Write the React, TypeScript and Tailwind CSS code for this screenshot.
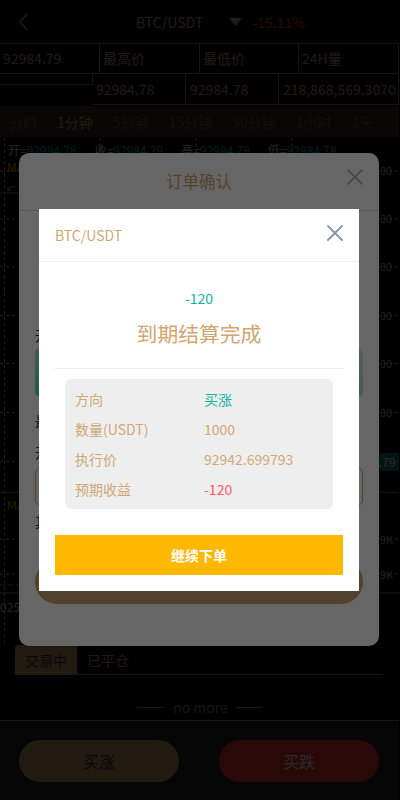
import { X, ChevronLeft } from 'lucide-react'

const tan = 'text-[#d0a877]'

const intervals = ['分时', '1分钟', '5分钟', '15分钟', '30分钟', '1小时', '1天']
const gridY = [33, 81, 129, 178, 226, 275, 324, 402, 437]
const gridX = [4, 100, 196, 292]
const axisLabels = [33, 81, 129, 178, 226, 275]

const orderRows = [
  { label: '方向', value: '买涨', color: 'text-[#13b5a0]' },
  { label: '数量(USDT)', value: '1000', color: tan },
  { label: '执行价', value: '92942.699793', color: tan },
  { label: '预期收益', value: '-120', color: 'text-[#ff5a5f]' },
]

function KlineChart() {
  return (
    <div className="relative h-[508px] overflow-hidden">
      <svg className="absolute inset-0 h-full w-full" viewBox="0 0 400 508" fill="none">
        {gridY.map((y) => (
          <line key={y} x1="0" x2="400" y1={y + 0.5} y2={y + 0.5} stroke="#e0e0e0" strokeDasharray="3 3" strokeOpacity="0.9" />
        ))}
        {gridX.map((x) => (
          <line key={x} x1={x + 0.5} x2={x + 0.5} y1="0" y2="508" stroke="#e0e0e0" strokeDasharray="3 3" strokeOpacity="0.9" />
        ))}
        <line x1="0" x2="400" y1="355.5" y2="355.5" stroke="#a0a0a0" />
        <line x1="0" x2="400" y1="456.5" y2="456.5" stroke="#a0a0a0" />
        <line x1="0" x2="20" y1="55.5" y2="55.5" stroke="#4a8cff" />
        <line x1="0" x2="20" y1="448.5" y2="448.5" stroke="#4a8cff" strokeDasharray="6 2" />
        <path d="M9 49.5h5M9 49.5v4M9 53.5l2-2M9 53.5l-2-2" stroke="#bbb" />
      </svg>

      <div className="relative flex gap-[18px] pl-2 pt-[4px] text-xs leading-[18px] text-[#e0e0e0]">
        {['开', '收', '高', '低'].map((k, i) => (
          <span key={k}>
            {k}=<span className="text-[#13b5a0]">{i === 1 ? '92984.79' : '92984.78'}</span>
          </span>
        ))}
      </div>
      <div className="relative pl-[7px] text-xs leading-[16px] text-[#f5a623]">MA</div>

      <span className="absolute left-[7px] top-[360px] text-xs text-[#f5a623]">MA</span>
      <span className="absolute left-0 top-[462px] text-xs text-[#e0e0e0]">025</span>
      {axisLabels.map((y) => (
        <span key={y} className="absolute left-[380px] text-[11px] leading-none text-[#c0c0c0]" style={{ top: y - 5 }}>
          00
        </span>
      ))}
      <span className="absolute left-[380px] top-[397px] text-[11px] leading-none text-[#c0c0c0]">9K</span>
      <span className="absolute left-[380px] top-[432px] text-[11px] leading-none text-[#c0c0c0]">9K</span>
      <span className="absolute left-[379px] top-[316px] h-[18px] w-[20px] rounded-l-sm bg-[#13b5a0]/70 text-xs leading-[18px] text-white">
        .79
      </span>
    </div>
  )
}

function MarketPage() {
  return (
    <div className="flex h-[800px] w-[399px] flex-col bg-black text-sm text-[#d2a56f]">
      <header className="flex h-[43px] shrink-0 items-center">
        <ChevronLeft className="ml-[8px] h-[30px] w-[30px] text-[#d2a56f]" strokeWidth={1.1} />
        <span className="ml-[98px]">BTC/USDT</span>
        <svg className="ml-[26px] h-[8px] w-[13px]" viewBox="0 0 13 8">
          <path d="M0 0h13L6.5 8z" fill="#d2a56f" />
        </svg>
        <span className="ml-[10px] text-[#ff3235]">-15.11%</span>
      </header>

      <div className="grid h-[31px] shrink-0 grid-cols-[100px_100px_99px_100px] border-y border-[#9a8a70] leading-[29px]">
        <div className="border-r border-[#9a8a70] pl-[3px]">92984.79</div>
        <div className="border-r border-[#9a8a70] pl-[3px]">最高价</div>
        <div className="border-r border-[#9a8a70] pl-[3px]">最低价</div>
        <div className="border-r border-[#9a8a70] pl-[3px]">24H量</div>
      </div>
      <div className="flex h-[31px] shrink-0 leading-[30px]">
        <div className="h-[11px] w-[93px] border-b border-r border-[#9a8a70]" />
        <div className="grid flex-1 grid-cols-[93px_93px_120px] border-b border-[#9a8a70]">
          <div className="border-r border-[#9a8a70] pl-[3px]">92984.78</div>
          <div className="border-r border-[#9a8a70] pl-[4px]">92984.78</div>
          <div className="border-r border-[#9a8a70] pl-[4px]">218,868,569.3070</div>
        </div>
      </div>

      <nav className="mt-px flex h-[31px] shrink-0 items-center gap-5 bg-[#3e3120] pl-[9px] text-[#6f6350]">
        {intervals.map((t) => (
          <span key={t} className={t === '1分钟' ? 'text-[#d2a56f]' : ''}>
            {t}
          </span>
        ))}
      </nav>

      <KlineChart />

      <div className="ml-[15px] mr-[16px] flex h-[30px] shrink-0 border-b border-[#d2a56f]">
        <span className="flex w-[62px] items-center justify-center rounded-t bg-[#d2a56f] text-[#333]">交易中</span>
        <span className="ml-[10px] flex items-center">已平仓</span>
      </div>

      <div className="mt-[22px] flex shrink-0 items-center justify-center gap-2 text-sm leading-5 text-[#888]">
        <span className="h-px w-[26px] bg-[#999]" />
        <span className="pl-[2px]">no more</span>
        <span className="h-px w-[26px] bg-[#999]" />
      </div>

      <div className="mt-[3px] flex flex-1 gap-[40px] border-t border-[#a08a60] bg-[#262626] pl-[19px] pt-[19px]">
        <button className="h-[42px] w-[160px] rounded-full bg-[#d2a56f] text-base text-[#333]">买涨</button>
        <button className="h-[42px] w-[160px] rounded-full bg-[#ff3235] text-base text-white">买跌</button>
      </div>
    </div>
  )
}

function OrderConfirm() {
  return (
    <div className="absolute left-[19px] top-[153px] h-[493px] w-[360px] rounded-[10px] bg-white text-sm text-[#333]">
      <div className="flex h-[58px] items-center justify-center border-b border-[#ddd] text-[16.5px] text-[#d2a56f]">
        订单确认
        <X className="absolute right-[10px] top-[10px] h-[28px] w-[28px] text-[#b0b0b0]" strokeWidth={1.5} />
      </div>
      {/* labels sit mostly behind the result modal, only the first glyph shows */}
      <div className="px-4">
        <p className="mt-[114px] leading-5">开</p>
        <div className="mt-[2px] h-[50px] rounded-md bg-gradient-to-tr from-[#46e0b0] to-[#e0e8e4]" />
        <p className="mt-[14px] leading-5">最</p>
        <p className="mt-[11px] leading-5">开</p>
        <div className="mt-[5px] h-[39px] rounded-md border border-[#d2a56f]" />
        <p className="mt-[5px] leading-5">其</p>
        <div className="mt-[29px] h-[44px] rounded-[22px] bg-[#cba56c]" />
      </div>
    </div>
  )
}

function ResultModal() {
  return (
    <div className="absolute left-[39px] top-[209px] h-[382px] w-[320px] bg-white text-sm">
      <div className="flex h-[53px] items-center justify-between border-b border-[#eee] pl-4 pr-[10px] text-[#d0a877]">
        BTC/USDT
        <X className="mb-[4px] h-[28px] w-[28px] text-[#8d97a8]" strokeWidth={1.6} />
      </div>
      <p className="mt-[26px] text-center leading-5 text-[#13b5a0]">-120</p>
      <h2 className="mt-[10px] text-center text-[20.8px] leading-[30px] text-[#d2a56f]">到期结算完成</h2>
      <div className="mx-4 mt-[20px] border-t border-[#eee] px-[10px] pt-[10px]">
        <div className="rounded-md bg-[#eee] px-[10px] py-[5px] text-[#d0a877]">
          {orderRows.map((row) => (
            <div key={row.label} className="flex h-[30px] items-center">
              <span className="w-[129px]">{row.label}</span>
              <span className={row.color}>{row.value}</span>
            </div>
          ))}
        </div>
      </div>
      <button className="mx-4 mt-[26px] block h-[40px] w-[288px] bg-[#ffb800] font-bold text-white">继续下单</button>
    </div>
  )
}

export default function App() {
  return (
    <div className="relative h-[800px] w-[400px] overflow-hidden bg-black font-['Noto_Sans_CJK_SC','Noto_Sans',sans-serif]">
      <MarketPage />
      <div className="absolute inset-0 bg-black/60" />
      <OrderConfirm />
      <div className="absolute inset-0 bg-black/60" />
      <ResultModal />
    </div>
  )
}
